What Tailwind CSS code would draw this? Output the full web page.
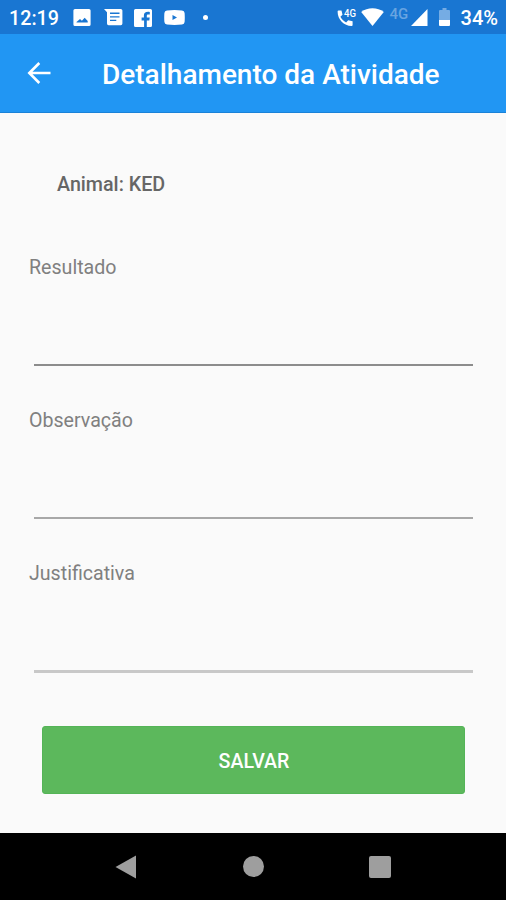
<!DOCTYPE html>
<html lang="pt-BR">
<head>
  <meta charset="UTF-8">
  <meta name="viewport" content="width=device-width, initial-scale=1.0">
  <title>Detalhamento da Atividade</title>
  <script src="https://cdn.jsdelivr.net/npm/@tailwindcss/browser@4"></script>
</head>
<body class="bg-[#fafafa] h-screen flex flex-col overflow-hidden font-['Roboto',sans-serif]">
  <!-- Status bar -->
  <div class="h-[34px] shrink-0 bg-[#1976d2] text-white flex items-center justify-between pl-[9px] pr-2">
    <div class="flex items-center pt-px">
      <span class="w-16 text-[19.7px] leading-5 font-medium pt-0.5">12:19</span>
      <svg class="w-[18px] h-[17px]" viewBox="0 0 18 17" fill="currentColor">
        <path fill-rule="evenodd" d="M2 0h14a1.6 1.6 0 0 1 1.6 1.6v13.8A1.6 1.6 0 0 1 16 17H2a1.6 1.6 0 0 1-1.600-1.600V1.600A1.600 1.600 0 0 1 2 0zM3.500 13.500h11.200V12l-3-3.200-2.800 3-1.900-1.800-3.500 3z"/>
      </svg>
      <svg class="w-[19px] h-[17px] ml-[13px]" viewBox="0 0 19 17" fill="currentColor">
        <path fill-rule="evenodd" d="M0 0h16.800A1.600 1.600 0 0 1 18.400 1.600v13a1.600 1.600 0 0 1-1.600 1.600H4.600a1.600 1.600 0 0 1-1.600-1.600V3.200zM6 3.600v1.300h9.500V3.600zM6 7.200v1.300h9.500V7.200zM6 10.800v1.300h6.300v-1.300z"/>
      </svg>
      <svg class="w-[18px] h-[18px] ml-[11px]" viewBox="0 0 18 18" fill="currentColor">
        <path fill-rule="evenodd" d="M1.500 0h15A1.500 1.500 0 0 1 18 1.500v15a1.500 1.500 0 0 1-1.500 1.500h-3.700v-6.600h2.500l.4-2.800h-2.900V6.900c0-.9.4-1.400 1.500-1.400h1.500V3c-3.900-.6-5.900.7-5.900 3.500v2.100H7.600v2.800h2.500V18H1.500A1.500 1.500 0 0 1 0 16.500v-15A1.500 1.500 0 0 1 1.500 0z"/>
      </svg>
      <svg class="w-[21px] h-[15px] ml-3" viewBox="0 0 21 15" fill="currentColor">
        <path fill-rule="evenodd" d="M3 .5Q10.500-.3 18 .5 20.400.7 20.600 3q.4 4.500 0 9-.2 2.300-2.600 2.500-7.500.8-15 0Q.6 14.300.4 12q-.4-4.500 0-9Q.6.700 3 .5zM8.500 4.900v5.200l4.500-2.600z"/>
      </svg>
      <span class="w-[5px] h-[5px] ml-[18px] rounded-full bg-white"></span>
    </div>
    <div class="flex items-center">
      <svg class="w-5 h-[19px] mt-px" viewBox="0 0 20 19" fill="currentColor">
        <path d="M1.600 2.500h2.900l1 4.200-2.100 2.100c1.300 2.700 3.200 4.400 5.700 5.600l2.100-2.100 4.400 1v3.700q0 1-1 1C6.800 18 .6 11.500.6 3.500q0-1 1-1z"/>
        <text x="7" y="9" font-size="10.500" font-weight="500" textLength="12" lengthAdjust="spacingAndGlyphs">4G</text>
      </svg>
      <svg class="w-[23px] h-[18px] ml-1" viewBox="0 0 23 18" fill="currentColor">
        <path d="M11.500 18 .2 3.900C6.500-1 16.500-1 22.800 3.900z"/>
      </svg>
      <span class="w-[21px] ml-1.5 mb-[5px] text-[15px] leading-none font-medium text-white/35">4G</span>
      <svg class="w-[17px] h-[17px]" viewBox="0 0 17 17" fill="currentColor">
        <path d="M16.500 0v17H0z"/>
      </svg>
      <svg class="w-[11px] h-[18px] ml-[11px]" viewBox="0 0 11 18" fill="currentColor">
        <path opacity=".4" d="M3.500 0h4v2H10q1 0 1 1v9H0V3q0-1 1-1h2.500z"/>
        <path d="M0 12h11v5q0 1-1 1H1q-1 0-1-1z"/>
      </svg>
      <span class="ml-[11px] text-[20px] leading-none font-medium pt-0.5">34%</span>
    </div>
  </div>

  <!-- App bar -->
  <header class="h-[79px] shrink-0 bg-[#2196f3] border-b border-[#1a82d8] text-white flex items-center">
    <button type="button" aria-label="Voltar" class="ml-[27px] w-6 h-6">
      <svg class="w-6 h-6" viewBox="0 0 24 24" fill="none" stroke="currentColor" stroke-width="2.600">
        <path d="M23.500 12H2M12.300 2 2.300 12l10 10"/>
      </svg>
    </button>
    <h1 class="ml-[51px] text-[28px] leading-none font-medium whitespace-nowrap pt-[3px]">Detalhamento da Atividade</h1>
  </header>

  <!-- Form -->
  <form class="grow flex flex-col pt-[60px] text-[19.6px] leading-6 text-[#808080]">
    <p class="ml-[57px] text-[19.7px] font-medium text-[#666]">Animal: KED</p>
    <div class="mt-[59px] h-[153px] pl-[29px] pr-[33px]">
      <label for="resultado" class="block">Resultado</label>
      <div class="pl-[5px]">
        <input id="resultado" type="text" class="block w-full h-[86px] border-b-2 border-[#8c8c8c] outline-none">
      </div>
    </div>
    <div class="h-[153px] pl-[29px] pr-[33px]">
      <label for="observacao" class="block">Observação</label>
      <div class="pl-[5px]">
        <input id="observacao" type="text" class="block w-full h-[86px] border-b-2 border-[#a8a8a8] outline-none">
      </div>
    </div>
    <div class="h-[153px] pl-[29px] pr-[33px]">
      <label for="justificativa" class="block">Justificativa</label>
      <div class="pl-[5px]">
        <input id="justificativa" type="text" class="block w-full h-[87px] border-b-3 border-[#c8c8c8] outline-none">
      </div>
    </div>
    <button type="button" class="mt-[11px] ml-[42px] w-[423px] h-[68px] pt-[3px] pl-px rounded-[3px] bg-[#5cb85c] border border-[#54b457] text-white text-[19.6px] font-medium">SALVAR</button>
  </form>

  <!-- Navigation bar -->
  <nav class="h-[67px] shrink-0 bg-black text-[#9e9e9e] flex items-center justify-between pl-[115px] pr-[115px]">
    <svg class="w-[22px] h-6" viewBox="0 0 22 24" fill="currentColor"><path d="M21 .5v23L.5 12z"/></svg>
    <span class="w-[21px] h-[21px] rounded-full bg-[#9e9e9e]"></span>
    <span class="w-[22px] h-[22px] rounded-[2px] bg-[#9e9e9e]"></span>
  </nav>
</body>
</html>
